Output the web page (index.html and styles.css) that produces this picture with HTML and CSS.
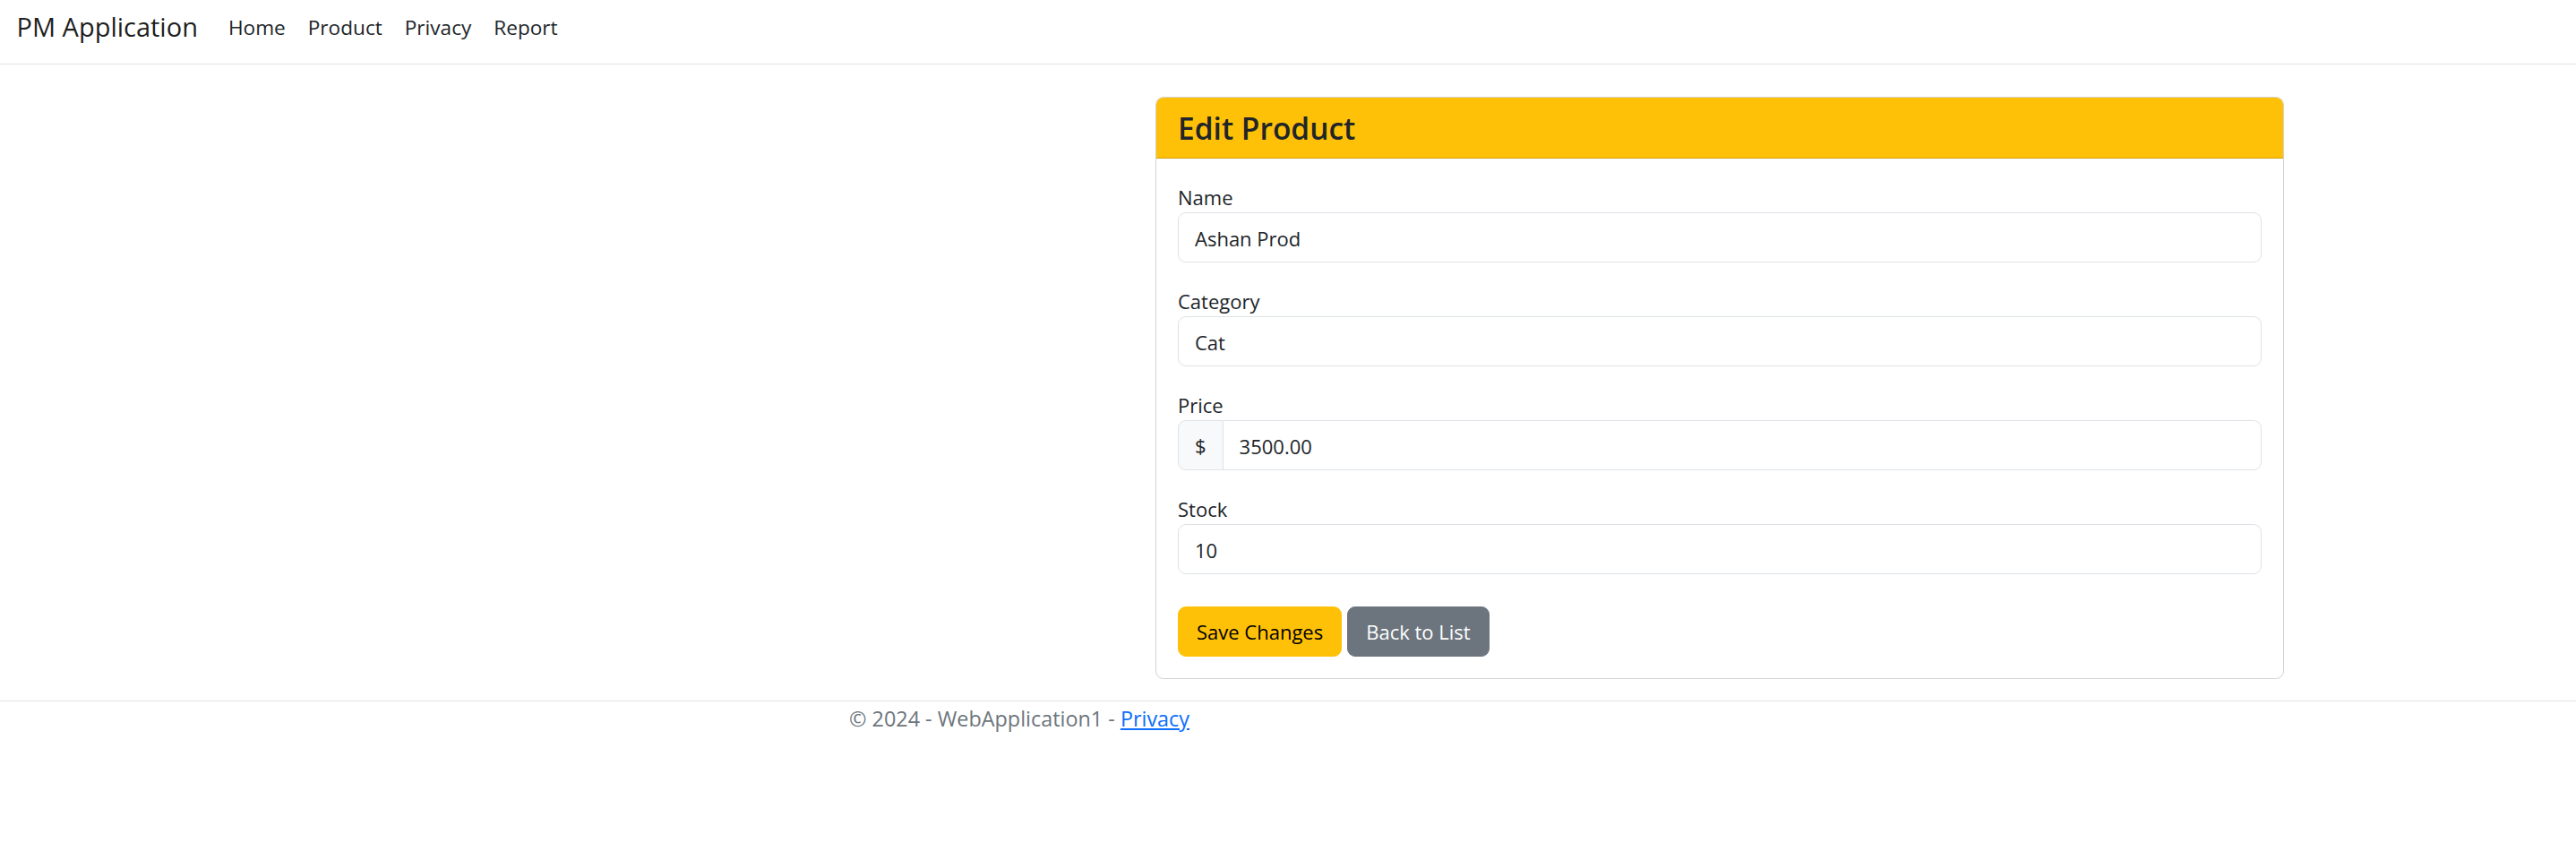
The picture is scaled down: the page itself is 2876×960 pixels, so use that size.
FILE: index.html
```html
<!DOCTYPE html>
<html lang="en">
<head>
<meta charset="utf-8">
<title>Edit Product - PM Application</title>
<link rel="stylesheet" href="styles.css">
</head>
<body>
<header class="navbar">
  <a class="brand" href="#">PM Application</a>
  <nav class="nav">
    <a class="nav-link" href="#">Home</a>
    <a class="nav-link" href="#">Product</a>
    <a class="nav-link" href="#">Privacy</a>
    <a class="nav-link" href="#">Report</a>
  </nav>
</header>
<main class="page">
  <section class="card">
    <div class="card-header">
      <h4 class="card-title">Edit Product</h4>
    </div>
    <form class="card-body">
      <div class="field">
        <label class="label" for="name">Name</label>
        <input class="input" id="name" type="text" value="Ashan Prod">
      </div>
      <div class="field">
        <label class="label" for="category">Category</label>
        <input class="input" id="category" type="text" value="Cat">
      </div>
      <div class="field">
        <label class="label" for="price">Price</label>
        <div class="input-group">
          <span class="addon">$</span>
          <input class="input input-joined" id="price" type="text" value="3500.00">
        </div>
      </div>
      <div class="field">
        <label class="label" for="stock">Stock</label>
        <input class="input" id="stock" type="text" value="10">
      </div>
      <div class="actions">
        <button class="btn btn-warning" type="button">Save Changes</button>
        <a class="btn btn-secondary" href="#">Back to List</a>
      </div>
    </form>
  </section>
</main>
<footer class="footer">
  <div class="footer-inner">© 2024 - WebApplication1 - <a class="footer-link" href="#">Privacy</a></div>
</footer>
</body>
</html>
```

FILE: styles.css
```css
* {
  box-sizing: border-box;
}

html, body {
  margin: 0;
  padding: 0;
  background: #fff;
}

body {
  font-family: "Segoe UI", "Open Sans", "Noto Sans", sans-serif;
  font-size: 22px;
  line-height: 33px;
  color: #212529;
}

a {
  text-decoration: none;
}

/* Navbar */
.navbar {
  display: flex;
  align-items: flex-start;
  height: 72px;
  padding: 8px 18.5px 0;
  border-bottom: 1px solid #e3e3e3;
}

.brand {
  font-size: 29px;
  line-height: 43px;
  color: rgba(0, 0, 0, 0.9);
  margin-right: 21.5px;
  white-space: nowrap;
}

.nav {
  display: flex;
  margin-top: 6px;
}

.nav-link {
  padding: 0 12.5px;
  color: #212529;
  font-size: 22.6px;
  line-height: 33px;
}

/* Page */
.page {
  padding: 36px 0 24px 1290px;
}

.card {
  width: 1260px;
  border: 1px solid rgba(0, 0, 0, 0.175);
  border-radius: 9px;
  overflow: hidden;
}

.card-header {
  background: #ffc107;
  padding: 2px 24px 0;
  border-bottom: 1px solid rgba(0, 0, 0, 0.175);
}

.card-title {
  margin: 0;
  font-size: 33.5px;
  font-weight: 600;
  line-height: 65px;
  color: #212529;
}

.card-body {
  padding: 27px 24px 24px;
  display: block;
}

.field {
  margin-bottom: 27px;
}

.label {
  display: block;
  height: 33px;
  line-height: 33px;
}

.input {
  display: block;
  width: 100%;
  height: 56px;
  margin: 0;
  padding: 1px 18px 0;
  font-family: inherit;
  font-size: 22px;
  line-height: 53px;
  color: #212529;
  background: #fff;
  border: 1px solid #dee2e6;
  border-radius: 9px;
  outline: none;
}

.input-group {
  display: flex;
}

.addon {
  flex: none;
  height: 56px;
  padding: 1px 18px 0;
  line-height: 53px;
  background: #f8f9fa;
  border: 1px solid #dee2e6;
  border-radius: 9px 0 0 9px;
  color: #212529;
}

.input-joined {
  flex: 1;
  border-left: none;
  border-radius: 0 9px 9px 0;
}

.actions {
  display: flex;
  gap: 6px;
  margin-top: 36px;
}

.btn {
  display: inline-block;
  height: 56px;
  padding: 1px 20px 0;
  font-family: inherit;
  font-size: 22px;
  line-height: 53px;
  border: 1px solid transparent;
  border-radius: 9px;
  cursor: pointer;
}

.btn-warning {
  background: #ffc107;
  border-color: #ffc107;
  color: #000;
}

.btn-secondary {
  background: #6c757d;
  border-color: #6c757d;
  color: #fff;
}

/* Footer */
.footer {
  border-top: 1px solid #dee2e6;
  padding-top: 2px;
}

.footer-inner {
  padding-left: 948px;
  font-size: 23.4px;
  line-height: 34px;
  color: #6c757d;
  white-space: nowrap;
}

.footer-link {
  color: #0d6efd;
  text-decoration: underline;
}
```
